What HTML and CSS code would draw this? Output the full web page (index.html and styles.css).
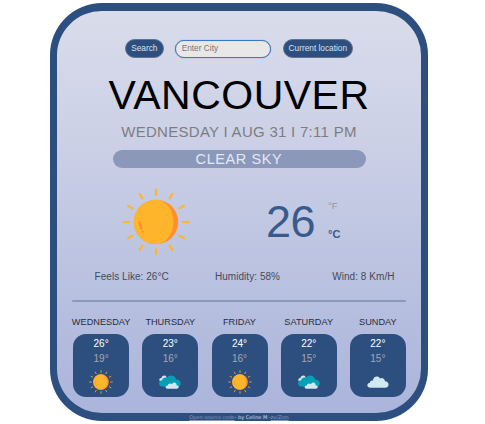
FILE: index.html
```html
<!DOCTYPE html>
<html lang="en">
<head>
<meta charset="utf-8">
<title>Weather</title>
<link rel="stylesheet" href="styles.css">
</head>
<body>
<svg width="0" height="0" class="defs" aria-hidden="true">
  <symbol id="sun" viewBox="-34 -34 68 68">
    <g stroke="#feb52b" stroke-width="2.2" stroke-linecap="round">
      <path d="M0-32.300V-27.200M0 32.300V27.200M-32.300 0H-27.200M32.300 0H27.200M-16.200-28L-13.600-23.500M16.200-28L13.600-23.500M-16.200 28L-13.600 23.500M16.200 28L13.600 23.500M-28-16.200L-23.500-13.600M28-16.200L23.500-13.600M-28 16.200L-23.500 13.600M28 16.200L23.500 13.600"/>
    </g>
    <circle r="22.200" fill="#ff8f2b"/>
    <path d="M0-22.200A22.200 22.200 0 0 0 0 22.200A17.500 22.200 0 0 0 0-22.200Z" fill="#feb52b"/>
    <path d="M-16.300 0Q-16.300 4-14.600 7M-13.200 9.600L-13 9.800" fill="none" stroke="#ff8f2b" stroke-width="2" stroke-linecap="round"/>
  </symbol>
  <symbol id="cloud" viewBox="0 0 24 16">
    <path d="M4.500 13.700H19C24 13.700 23.500 7.500 19 7.300C18.500 4.200 15.500 3.300 14 4.500C12.500 1.200 7 2.200 7 6.500C5 6 3.800 7.300 4 8.700C.300 9 .500 13.700 4.500 13.700Z" fill="#d0e8f0"/>
  </symbol>
  <symbol id="clouds" viewBox="0 0 24 16">
    <path d="M3.200 7.500C.300 7 1 3.800 3.500 4C4 1.300 8 .700 8.500 3.200L9 6Z" fill="#d0e8f0"/>
    <path d="M4 12.300C0 12.200 0 6.500 4.200 6.300C4.500 3.500 7.500 3 9 4C10.500 .200 17.500 .800 18 5.500C22 4.800 24.500 10 21.200 12.600C18 13.500 8 13.500 4 12.300Z" fill="#079fb5"/>
    <path d="M9.500 14.700C6.800 14.500 7.300 11.200 9.800 11.500C10 9.300 12.700 8.800 13.800 10.200C15.500 7.200 19 8.800 18.500 11.200C21.500 11.200 21.200 14.700 18.800 14.700Z" fill="#d0e8f0"/>
  </symbol>
</svg>
<main class="app">
  <form class="search">
    <button type="button" class="btn btn-search">Search</button>
    <input class="city-input" type="text" placeholder="Enter City">
    <button type="button" class="btn btn-location">Current location</button>
  </form>
  <h1 class="city">VANCOUVER</h1>
  <p class="date">WEDNESDAY I AUG 31 I 7:11 PM</p>
  <p class="condition">CLEAR SKY</p>
  <section class="current">
    <svg class="current-icon"><use href="#sun"/></svg>
    <span class="temp">26</span>
    <div class="units"><span class="unit-f">°F</span><span class="unit-c">°C</span></div>
  </section>
  <section class="stats">
    <span>Feels Like: 26°C</span><span class="humidity">Humidity: 58%</span><span>Wind: 8 Km/H</span>
  </section>
  <hr class="divider">
  <section class="forecast">
    <div class="day"><h2>WEDNESDAY</h2><div class="card"><b>26°</b><i>19°</i><svg><use href="#sun"/></svg></div></div>
    <div class="day"><h2>THURSDAY</h2><div class="card"><b>23°</b><i>16°</i><svg><use href="#clouds"/></svg></div></div>
    <div class="day"><h2>FRIDAY</h2><div class="card"><b>24°</b><i>16°</i><svg><use href="#sun"/></svg></div></div>
    <div class="day"><h2>SATURDAY</h2><div class="card"><b>22°</b><i>15°</i><svg><use href="#clouds"/></svg></div></div>
    <div class="day"><h2>SUNDAY</h2><div class="card"><b>22°</b><i>15°</i><svg><use href="#cloud"/></svg></div></div>
  </section>
  <footer class="credit"><a>Open-source code</a>- by Celine M -<a>zviZion</a></footer>
</main>
</body>
</html>
```
FILE: styles.css
```css
* { box-sizing: border-box; margin: 0; }
body {
  background: #fff;
  font-family: "Liberation Sans", Arial, sans-serif;
  overflow: hidden;
}
.defs { display: none; }
.app {
  width: 378px;
  height: 418px;
  margin: 3px 0 0 50px;
  border: 8px solid #2d4f7f;
  border-width: 8px 7px;
  border-radius: 52px;
  background: linear-gradient(#d9dcea, #cbd0e6 33%, #bac2e0 66%, #abb4db);
  display: flex;
  flex-direction: column;
  align-items: center;
}
.app > * { flex-shrink: 0; }
.search {
  display: flex;
  align-items: center;
  width: 228px;
  height: 19px;
  margin-top: 28px;
}
.btn {
  height: 19px;
  padding: 0 0 1px;
  border: 1px solid #66708d;
  border-radius: 10px;
  background: #2d4f7f;
  color: #dbe1ee;
  font: 8.300px/15px "Liberation Sans", Arial, sans-serif;
  white-space: nowrap;
}
.btn-search { width: 39px; }
.btn-location { width: 71px; margin-left: 12px; }
.city-input {
  width: 96px;
  height: 18px;
  margin-left: 11px;
  padding: 0 6px 1px;
  border: 1px solid #3978cf;
  border-radius: 9px;
  box-shadow: 0 0 1px #687080;
  background: #e8e8e8;
  font: 8.300px "Liberation Sans", Arial, sans-serif;
}
.city-input::placeholder { color: #777; }
.city {
  height: 60px;
  margin-top: 7px;
  line-height: 60px;
  font-size: 41px;
  font-weight: 400;
  letter-spacing: 0.500px;
  white-space: nowrap;
  color: #000;
}
.date {
  height: 20px;
  margin-top: -3px;
  line-height: 20px;
  font-size: 15px;
  letter-spacing: 0.280px;
  color: #7d7d81;
  white-space: nowrap;
}
.condition {
  width: 253px;
  height: 18px;
  margin-top: 8px;
  border-radius: 9px;
  background: #8b98b9;
  color: #e4e8f5;
  font-size: 14.500px;
  letter-spacing: 0.600px;
  line-height: 18px;
  text-align: center;
}
.current {
  width: 234px;
  height: 68px;
  margin-top: 20px;
  display: flex;
  align-items: center;
}
.current-icon { width: 68px; height: 68px; flex: none; }
.temp {
  width: 50px;
  margin-left: 76px;
  color: #385b8b;
  font-size: 45px;
  letter-spacing: -0.500px;
  line-height: 68px;
}
.units {
  display: flex;
  flex-direction: column;
  justify-content: space-between;
  height: 40px;
  margin: 0 0 4px 12px;
}
.unit-f { font-size: 9.500px; line-height: 11px; color: #9094a6; }
.unit-c { font-size: 11px; line-height: 11px; font-weight: 700; color: #385b8b; }
.stats {
  display: flex;
  justify-content: space-between;
  width: 300px;
  height: 14px;
  margin: 14px 0 0 11px;
  font-size: 10px;
  letter-spacing: 0.050px;
  line-height: 14px;
  color: #444a5a;
  white-space: nowrap;
}
.humidity { margin-right: 6px; }
.divider {
  width: 334px;
  height: 2px;
  margin-top: 16px;
  border: 0;
  border-radius: 1px;
  background: #8b98b9;
}
.forecast {
  display: grid;
  grid-template-columns: repeat(5, 69.200px);
  margin: 14px 0 0 1px;
}
.day { display: flex; flex-direction: column; align-items: center; }
.day h2 {
  height: 12px;
  font-size: 9.200px;
  font-weight: 400;
  line-height: 13px;
  color: #292e38;
}
.card {
  display: flex;
  flex-direction: column;
  align-items: center;
  width: 56px;
  height: 63px;
  margin-top: 6px;
  padding-top: 3px;
  border-radius: 13px;
  background: #2d4f7f;
}
.card b, .card i {
  height: 15px;
  font-size: 10px;
  font-style: normal;
  font-weight: 400;
  line-height: 14px;
}
.card b { color: #fff; }
.card i { color: #a3a8b1; }
.card svg { width: 24px; height: 24px; margin-top: 3px; }
.credit {
  margin-top: 16px;
  height: 8px;
  font: 5px/8px "DejaVu Sans", sans-serif;
  color: #d5dcea;
  white-space: nowrap;
}
.credit a { color: #8a9bbd; text-decoration: underline; }
```
